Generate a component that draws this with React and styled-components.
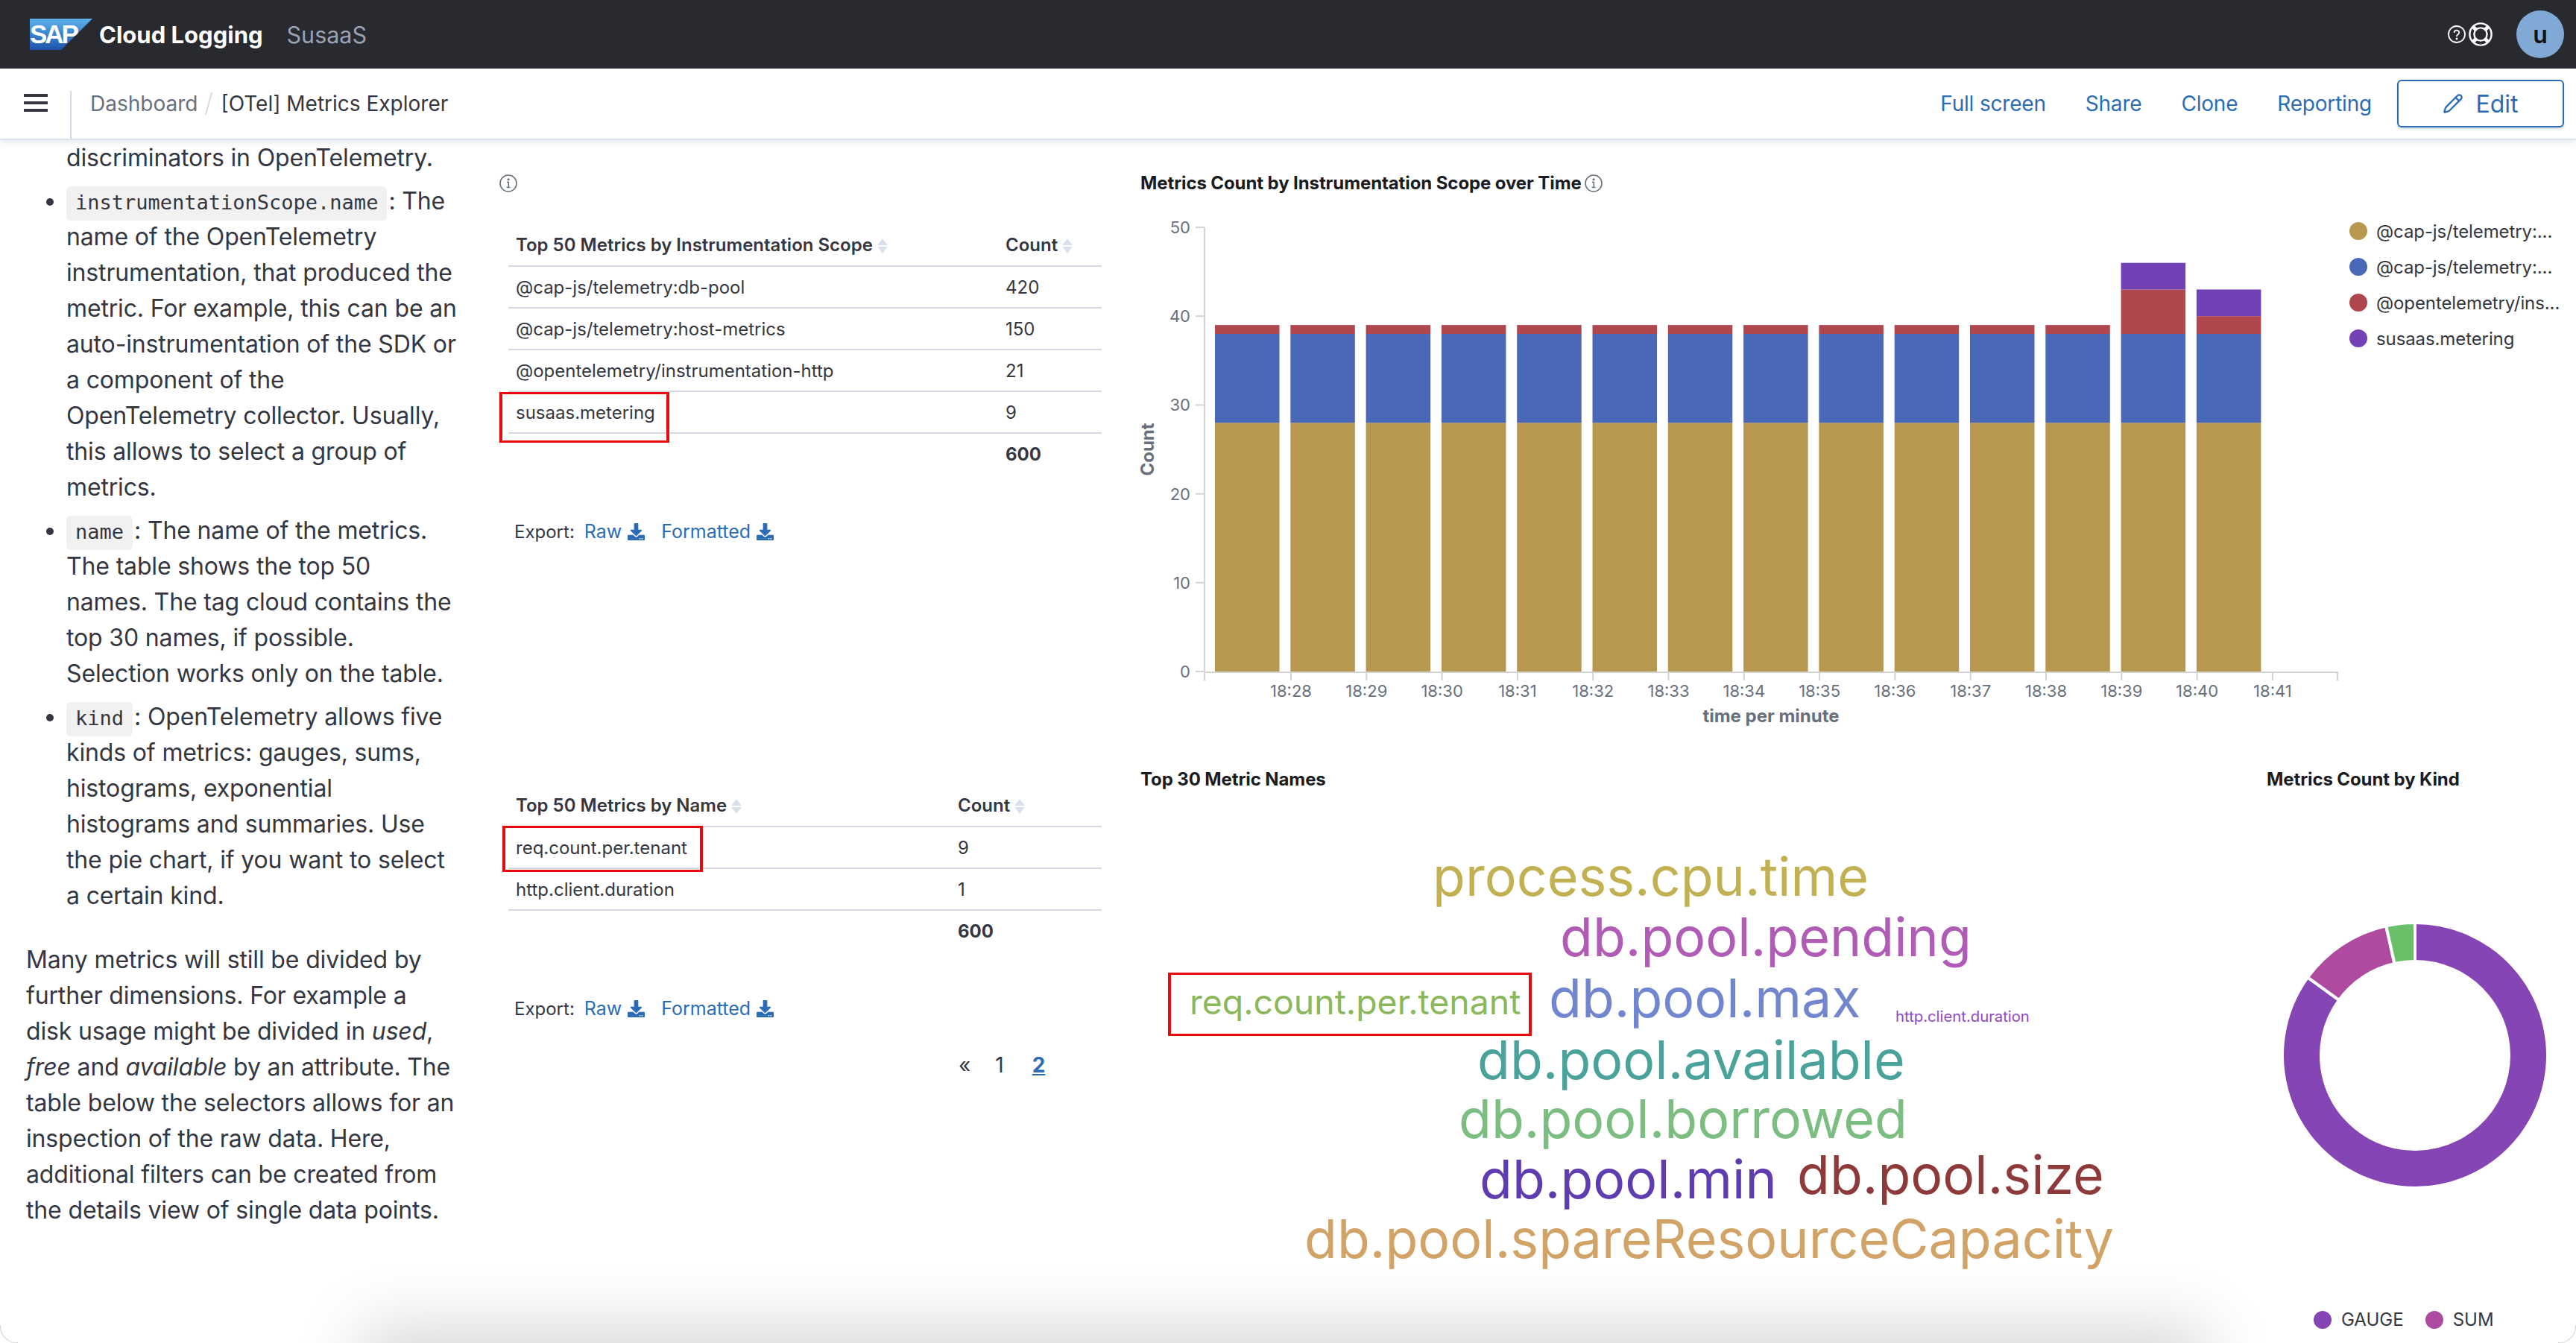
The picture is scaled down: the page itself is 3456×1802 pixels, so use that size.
import React from "react";
import styled, { createGlobalStyle } from "styled-components";
import { FaDownload } from "react-icons/fa";
import { Pencil } from "lucide-react";

const Global = createGlobalStyle`
  html, body { margin: 0; padding: 0; background: #fff; }
  body { font-family: Inter, "Liberation Sans", sans-serif; color: #343741; }
  * { box-sizing: border-box; }
`;

const Page = styled.div`
  position: relative;
  width: 3456px;
  height: 1802px;
  overflow: hidden;
  display: flex;
  flex-direction: column;
  background: #fff;
`;

const TopBar = styled.header`
  height: 92px;
  flex: none;
  background: #282a30;
  display: flex;
  align-items: center;
  padding: 0 16px 0 40px;
`;
const Product = styled.span`
  margin-left: 9px;
  font-size: 31px;
  font-weight: 700;
  color: #fff;
`;
const Space = styled.span`
  margin-left: 32px;
  font-size: 30.5px;
  font-weight: 400;
  color: #98a2b3;
`;
const TopRight = styled.div`
  margin-left: auto;
  display: flex;
  align-items: center;
  gap: 4px;
`;
const Avatar = styled.div`
  width: 64px;
  height: 64px;
  margin-left: 28px;
  border-radius: 50%;
  background: #80a9d6;
  color: #111;
  font-size: 32px;
  font-weight: 600;
  display: flex;
  align-items: center;
  justify-content: center;
`;

const NavBar = styled.nav`
  position: relative;
  z-index: 2;
  height: 96px;
  flex: none;
  background: #fff;
  display: flex;
  align-items: center;
  padding-right: 16px;
  border-bottom: 2px solid #dde2ec;
  box-shadow: 0 3px 8px rgba(152, 162, 179, 0.25);
`;
const MenuCell = styled.div`
  align-self: flex-end;
  width: 96px;
  height: 64px;
  padding: 4px 0 0 32px;
  border-right: 2px solid #d3dae6;
  display: flex;
  align-items: flex-start;
`;
const Crumbs = styled.div`
  margin-left: 25px;
  display: flex;
  align-items: center;
  font-size: 28px;
`;
const CrumbLink = styled.span`
  color: #69707d;
`;
const CrumbSep = styled.span`
  width: 2px;
  height: 30px;
  margin: 0 15px 0 14px;
  background: #d3dae6;
  transform: skewX(-15deg);
`;
const CrumbCurrent = styled.span`
  color: #343741;
`;
const NavActions = styled.div`
  margin-left: auto;
  display: flex;
  align-items: center;
  gap: 53px;
`;
const NavLink = styled.span`
  font-size: 28px;
  letter-spacing: -0.2px;
  color: #2b6cb5;
`;
const EditButton = styled.button`
  width: 224px;
  height: 64px;
  margin-left: -19px;
  background: #fff;
  border: 2px solid #2b6cb5;
  border-radius: 6px;
  box-shadow: 0 2px 3px rgba(43, 108, 181, 0.25);
  color: #2b6cb5;
  font: 400 32px Inter, sans-serif;
  display: flex;
  align-items: center;
  justify-content: center;
  gap: 16px;
`;

const Main = styled.main`
  flex: 1;
  min-height: 0;
  display: grid;
  grid-template-columns: 670px 830px 1956px;
`;

const TextColumn = styled.div`
  padding: 0 55px 0 35px;
  font-size: 32px;
  line-height: 48px;
  letter-spacing: -0.15px;
  color: #343741;
`;
const Bullets = styled.ul`
  margin: 0 0 38px;
  padding-left: 54px;
`;
const Bullet = styled.li`
  margin-top: 10px;
  &:first-child { margin-top: 0; list-style: none; }
`;
const Code = styled.code`
  font-family: "DejaVu Sans Mono", monospace;
  font-size: 27px;
  line-height: 1;
  letter-spacing: 0;
  padding: 6px 12px 9px;
  margin-right: 2px;
  background: #f1f1f2;
  border-radius: 6px;
  color: #343741;
`;
const Para = styled.p`
  margin: 0;
`;

const TableColumn = styled.div`
  padding-top: 46px;
`;
const InfoRow = styled.div`
  height: 24px;
  margin-bottom: 43px;
  display: flex;
`;
const TableBlock = styled.div`
  height: ${(p) => p.$height}px;
  padding-left: 12px;
`;
const TableWrap = styled.div`
  position: relative;
  width: 796px;
`;
const DataTable = styled.table`
  width: 796px;
  table-layout: fixed;
  border-collapse: collapse;
  font-size: 24px;
  color: #343741;
`;
const HeadCell = styled.th`
  width: ${(p) => (p.$w ? `${p.$w}px` : "auto")};
  height: 56px;
  padding: 0 10px;
  text-align: left;
  font-weight: 600;
  border-bottom: 2px solid #d3dae6;
  white-space: nowrap;
`;
const Cell = styled.td`
  height: 56px;
  padding: 0 10px;
  border-bottom: 2px solid #d3dae6;
`;
const TotalCell = styled.td`
  height: 56px;
  padding: 0 10px;
  font-weight: 700;
`;
const SortIcon = styled.svg`
  width: 14px;
  height: 20px;
  margin-left: 6px;
  vertical-align: -3px;
`;
const RedBox = styled.div`
  position: absolute;
  left: ${(p) => p.$l}px;
  top: ${(p) => p.$t}px;
  width: ${(p) => p.$w}px;
  height: ${(p) => p.$h}px;
  border-style: solid;
  border-color: #e80a0c;
  border-width: 3px 4px;
  pointer-events: none;
`;
const ExportRow = styled.div`
  margin-top: 56px;
  height: 40px;
  padding-left: 8px;
  display: flex;
  align-items: center;
  font-size: 24px;
  color: #343741;
`;
const ExportLink = styled.span`
  margin-left: ${(p) => p.$gap}px;
  font-size: 25px;
  color: #2b6cb5;
  display: inline-flex;
  align-items: center;
  gap: 8px;
`;
const Pager = styled.div`
  margin-top: 36px;
  height: 40px;
  padding-left: 604px;
  display: flex;
  align-items: center;
  font-size: 28px;
  color: #343741;
`;
const PageItem = styled.span`
  margin-left: ${(p) => p.$gap}px;
  color: ${(p) => (p.$active ? "#2b6cb5" : "#343741")};
  font-weight: ${(p) => (p.$active ? 700 : 400)};
  text-decoration: ${(p) => (p.$active ? "underline" : "none")};
`;

const ChartColumn = styled.div`
  display: flex;
  flex-direction: column;
`;
const TopPanel = styled.section`
  height: 832px;
  flex: none;
  padding-top: 42px;
`;
const PanelTitle = styled.h3`
  margin: 0;
  padding-left: ${(p) => p.$left}px;
  height: 32px;
  font-size: 24px;
  line-height: 32px;
  font-weight: 700;
  letter-spacing: -0.1px;
  color: #1a1c21;
  display: flex;
  align-items: center;
  gap: 4px;
`;
const ChartRow = styled.div`
  margin-top: 8px;
  display: flex;
`;
const Legend = styled.ul`
  margin: 16px 0 0 12px;
  padding: 0;
  list-style: none;
  font-size: 24px;
  letter-spacing: -0.1px;
  color: #343741;
`;
const LegendItem = styled.li`
  height: 48px;
  display: flex;
  align-items: center;
  gap: 12px;
  white-space: nowrap;
`;
const Dot = styled.span`
  width: 24px;
  height: 24px;
  flex: none;
  border-radius: 50%;
  background: ${(p) => p.$c};
`;
const BottomRow = styled.section`
  flex: 1;
  display: grid;
  grid-template-columns: 1480px 476px;
  padding-top: 10px;
`;
const CloudPanel = styled.div`
  position: relative;
  display: flex;
  flex-direction: column;
`;
const PiePanel = styled.div`
  display: flex;
  flex-direction: column;
`;
const PieLegend = styled.div`
  margin-top: 30px;
  padding-left: 124px;
  display: flex;
  align-items: center;
  font-size: 24px;
  color: #343741;
  gap: 13px;
`;
const PieLegendGap = styled.span`
  width: 3px;
`;
const AxisText = styled.text`
  font: 22px Inter, sans-serif;
  fill: #69707d;
`;
const AxisTitle = styled.text`
  font: 700 24px Inter, sans-serif;
  fill: #69707d;
  text-anchor: middle;
`;
const CloudWord = styled.text`
  font-family: Inter, sans-serif;
  font-size: ${(p) => p.$s}px;
  fill: ${(p) => p.$c};
`;
const LogoText = styled.text`
  font: 700 35px "Liberation Sans", sans-serif;
  fill: #fff;
  letter-spacing: -3px;
`;
const FloorShadow = styled.div`
  position: absolute;
  left: 525px;
  width: 2395px;
  top: 1820px;
  height: 60px;
  box-shadow: 0 0 90px 40px rgba(0, 0, 0, 0.16);
  pointer-events: none;
`;
const Corner = styled.div`
  position: absolute;
  bottom: 0;
  ${(p) => p.$side}: 0;
  width: 24px;
  height: 24px;
  border-bottom: 1px solid #d4d4d4;
  border-${(p) => p.$side}: 1px solid #d4d4d4;
  border-bottom-${(p) => p.$side}-radius: 22px;
  pointer-events: none;
`;

const SapLogo = () => (
  <svg width="84" height="42" viewBox="0 0 84 42">
    <defs>
      <linearGradient id="sapg" x1="0" y1="0" x2="0" y2="1">
        <stop offset="0" stopColor="#5cb3ea" />
        <stop offset="1" stopColor="#1d52ad" />
      </linearGradient>
    </defs>
    <polygon points="0,0 84,0 42,42 0,42" fill="url(#sapg)" />
    <LogoText x="0" y="33">SAP</LogoText>
  </svg>
);

const Hamburger = () => (
  <svg width="32" height="24" viewBox="0 0 32 24">
    <rect y="0" width="32" height="4" fill="#343741" />
    <rect y="10" width="32" height="4" fill="#343741" />
    <rect y="20" width="32" height="4" fill="#343741" />
  </svg>
);

const HelpIcon = () => (
  <svg width="24" height="24" viewBox="0 0 24 24" fill="none" stroke="#fff" strokeWidth="1.8" strokeLinecap="round">
    <circle cx="12" cy="12" r="11" />
    <path d="M8.6 9.2a3.4 3.4 0 0 1 6.7.6c0 2.2-3.3 2.6-3.3 4.6" />
    <circle cx="12" cy="18" r="0.6" fill="#fff" />
  </svg>
);

const LifeBuoyIcon = () => (
  <svg width="32" height="32" viewBox="0 0 32 32" fill="none" stroke="#fff">
    <circle cx="16" cy="16" r="14.6" strokeWidth="2.4" />
    <circle cx="16" cy="16" r="8.6" strokeWidth="2.4" />
    <path d="M10 10 5.8 5.8M22 10l4.2-4.2M10 22l-4.2 4.2M22 22l4.2 4.2" strokeWidth="5" />
  </svg>
);

const InfoIcon = ({ color = "#69707d" }) => (
  <svg width="24" height="24" viewBox="0 0 24 24" fill="none" stroke={color} strokeWidth="1.6">
    <circle cx="12" cy="12" r="11" />
    <path d="M10 10.5h2.3v7M9.6 17.5h5" />
    <circle cx="12" cy="6.8" r="0.8" fill={color} />
  </svg>
);

const Sort = () => (
  <SortIcon viewBox="0 0 13 18">
    <path d="M6.5 0 13 8H0zM0 10h13l-6.5 8z" fill="#d9dfeb" />
  </SortIcon>
);

const Table = ({ title, firstWidth, rows, box }) => (
  <TableWrap>
    <DataTable>
      <thead>
        <tr>
          <HeadCell $w={firstWidth}>
            {title}
            <Sort />
          </HeadCell>
          <HeadCell>
            Count
            <Sort />
          </HeadCell>
        </tr>
      </thead>
      <tbody>
        {rows.map(([n, c]) => (
          <tr key={n}>
            <Cell>{n}</Cell>
            <Cell>{c}</Cell>
          </tr>
        ))}
        <tr>
          <TotalCell />
          <TotalCell>600</TotalCell>
        </tr>
      </tbody>
    </DataTable>
    <RedBox $l={box.l} $t={box.t} $w={box.w} $h={box.h} />
  </TableWrap>
);

const Export = () => (
  <ExportRow>
    Export:
    <ExportLink $gap={13}>
      Raw <FaDownload size={23} />
    </ExportLink>
    <ExportLink $gap={22}>
      Formatted <FaDownload size={23} />
    </ExportLink>
  </ExportRow>
);

const GOLD = "#b8974f";
const BLUE = "#4968b8";
const RED = "#b0474e";
const PURPLE = "#7241b5";
const Y = (v) => 901 - v * 11.92;
const bars = Array.from({ length: 14 }, (_, i) =>
  i === 12 ? [28, 38, 43, 46] : i === 13 ? [28, 38, 40, 43] : [28, 38, 39, 39]
);

const BarChart = () => (
  <svg width="1640" height="710" viewBox="1500 270 1640 710">
    {bars.map((b, i) => {
      const x = 1630 + i * 101.3;
      return (
        <g key={i}>
          <rect x={x} y={Y(b[0])} width="86.5" height={Y(0) - Y(b[0])} fill={GOLD} />
          <rect x={x} y={Y(b[1])} width="86.5" height={Y(b[0]) - Y(b[1])} fill={BLUE} />
          <rect x={x} y={Y(b[2])} width="86.5" height={Y(b[1]) - Y(b[2])} fill={RED} />
          <rect x={x} y={Y(b[3])} width="86.5" height={Y(b[2]) - Y(b[3])} fill={PURPLE} />
        </g>
      );
    })}
    <path d="M1616 305V913M1616 902H3136V913" fill="none" stroke="#d3d3d3" strokeWidth="2" />
    {[0, 10, 20, 30, 40, 50].map((v) => (
      <g key={v}>
        <line x1="1604" x2="1616" y1={Y(v)} y2={Y(v)} stroke="#d3d3d3" strokeWidth="2" />
        <AxisText x="1597" y={Y(v) + 8} textAnchor="end">{v}</AxisText>
      </g>
    ))}
    {Array.from({ length: 14 }, (_, i) => {
      const x = 1732 + i * 101.3;
      return (
        <g key={i}>
          <line x1={x} x2={x} y1="902" y2="913" stroke="#d3d3d3" strokeWidth="2" />
          <AxisText x={x} y="935" textAnchor="middle">{`18:${28 + i}`}</AxisText>
        </g>
      );
    })}
    <AxisTitle transform="translate(1548 603) rotate(-90)">Count</AxisTitle>
    <AxisTitle x="2376" y="969">time per minute</AxisTitle>
  </svg>
);

const words = [
  ["process.cpu.time", 1922, 1202, 71.7, "#c2b153"],
  ["db.pool.pending", 2093, 1283, 71.7, "#b05cb6"],
  ["req.count.per.tenant", 1596, 1361, 46.4, "#8ab85a"],
  ["db.pool.max", 2078, 1365, 71.7, "#7286d0"],
  ["http.client.duration", 2543, 1371, 20.3, "#9047c8"],
  ["db.pool.available", 1982, 1448, 71.7, "#4aa39a"],
  ["db.pool.borrowed", 1957, 1527, 71.7, "#7cbd82"],
  ["db.pool.min", 1985, 1608, 71.7, "#5f3db0"],
  ["db.pool.size", 2411, 1602, 71.7, "#8f3a3a"],
  ["db.pool.spareResourceCapacity", 1750, 1688, 71.7, "#d2a367"],
];

const TagCloud = () => (
  <svg width="1480" height="740" viewBox="1500 1062 1480 740">
    {words.map(([t, x, y, s, c]) => (
      <CloudWord key={t} x={x} y={y} $s={s} $c={c}>{t}</CloudWord>
    ))}
  </svg>
);

const arc = (a0, a1, R, r) => {
  const cx = 3240, cy = 1416;
  const pt = (a, rad) => [cx + rad * Math.sin(a), cy - rad * Math.cos(a)];
  const [x0, y0] = pt(a0, R), [x1, y1] = pt(a1, R), [x2, y2] = pt(a1, r), [x3, y3] = pt(a0, r);
  const large = a1 - a0 > Math.PI ? 1 : 0;
  return `M${x0} ${y0}A${R} ${R} 0 ${large} 1 ${x1} ${y1}L${x2} ${y2}A${r} ${r} 0 ${large} 0 ${x3} ${y3}Z`;
};
const T = Math.PI * 2;
const Donut = () => (
  <svg width="476" height="664" viewBox="2980 1062 476 664">
    <path d={arc(0, T * 0.85, 178, 126)} fill="#8645b5" stroke="#fff" strokeWidth="4" />
    <path d={arc(T * 0.85, T * 0.965, 178, 126)} fill="#ae4a9f" stroke="#fff" strokeWidth="4" />
    <path d={arc(T * 0.965, T, 178, 126)} fill="#6abf69" stroke="#fff" strokeWidth="4" />
  </svg>
);

export default function App() {
  return (
    <Page>
      <Global />
      <TopBar>
        <SapLogo />
        <Product>Cloud Logging</Product>
        <Space>SusaaS</Space>
        <TopRight>
          <HelpIcon />
          <LifeBuoyIcon />
          <Avatar>u</Avatar>
        </TopRight>
      </TopBar>
      <NavBar>
        <MenuCell>
          <Hamburger />
        </MenuCell>
        <Crumbs>
          <CrumbLink>Dashboard</CrumbLink>
          <CrumbSep />
          <CrumbCurrent>[OTel] Metrics Explorer</CrumbCurrent>
        </Crumbs>
        <NavActions>
          <NavLink>Full screen</NavLink>
          <NavLink>Share</NavLink>
          <NavLink>Clone</NavLink>
          <NavLink>Reporting</NavLink>
          <EditButton>
            <Pencil size={28} strokeWidth={2} />
            Edit
          </EditButton>
        </NavActions>
      </NavBar>
      <Main>
        <TextColumn>
          <Bullets>
            <Bullet>discriminators in OpenTelemetry.</Bullet>
            <Bullet>
              <Code>instrumentationScope.name</Code>: The name of the OpenTelemetry instrumentation, that produced the metric. For example, this can be an auto-instrumentation of the SDK or a component of the OpenTelemetry collector. Usually, this allows to select a group of metrics.
            </Bullet>
            <Bullet>
              <Code>name</Code>: The name of the metrics. The table shows the top 50<br />names. The tag cloud contains the top 30 names, if possible. Selection works only on the table.
            </Bullet>
            <Bullet>
              <Code>kind</Code>: OpenTelemetry allows five kinds of metrics: gauges, sums, histograms, exponential histograms and summaries. Use the pie chart, if you want to select a certain kind.
            </Bullet>
          </Bullets>
          <Para>
            Many metrics will still be divided by further dimensions. For example a<br />disk usage might be divided in <em>used</em>, <em>free</em> and <em>available</em> by an attribute. The table below the selectors allows for an inspection of the raw data. Here, additional filters can be created from the details view of single data points.
          </Para>
        </TextColumn>
        <TableColumn>
          <InfoRow>
            <InfoIcon />
          </InfoRow>
          <TableBlock $height={752}>
            <Table
              title="Top 50 Metrics by Instrumentation Scope"
              firstWidth={657}
              rows={[
                ["@cap-js/telemetry:db-pool", 420],
                ["@cap-js/telemetry:host-metrics", 150],
                ["@opentelemetry/instrumentation-http", 21],
                ["susaas.metering", 9],
              ]}
              box={{ l: -12, t: 225, w: 228, h: 68 }}
            />
            <Export />
          </TableBlock>
          <TableBlock $height={420}>
            <Table
              title="Top 50 Metrics by Name"
              firstWidth={593}
              rows={[
                ["req.count.per.tenant", 9],
                ["http.client.duration", 1],
              ]}
              box={{ l: -8, t: 55, w: 269, h: 62 }}
            />
            <Export />
            <Pager>
              <PageItem $gap={0}>«</PageItem>
              <PageItem $gap={33}>1</PageItem>
              <PageItem $gap={38} $active>2</PageItem>
            </Pager>
          </TableBlock>
        </TableColumn>
        <ChartColumn>
          <TopPanel>
            <PanelTitle $left={30}>
              Metrics Count by Instrumentation Scope over Time
              <InfoIcon />
            </PanelTitle>
            <ChartRow>
              <BarChart />
              <Legend>
                <LegendItem><Dot $c={GOLD} />@cap-js/telemetry:...</LegendItem>
                <LegendItem><Dot $c={BLUE} />@cap-js/telemetry:...</LegendItem>
                <LegendItem><Dot $c={RED} />@opentelemetry/ins...</LegendItem>
                <LegendItem><Dot $c={PURPLE} />susaas.metering</LegendItem>
              </Legend>
            </ChartRow>
          </TopPanel>
          <BottomRow>
            <CloudPanel>
              <PanelTitle $left={30}>Top 30 Metric Names</PanelTitle>
              <TagCloud />
              <RedBox $l={67} $t={275} $w={488} $h={85} />
            </CloudPanel>
            <PiePanel>
              <PanelTitle $left={61}>Metrics Count by Kind</PanelTitle>
              <Donut />
              <PieLegend>
                <Dot $c="#8645b5" />
                GAUGE
                <PieLegendGap />
                <Dot $c="#ae4a9f" />
                SUM
              </PieLegend>
            </PiePanel>
          </BottomRow>
        </ChartColumn>
      </Main>
      <FloorShadow />
      <Corner $side="left" />
      <Corner $side="right" />
    </Page>
  );
}
